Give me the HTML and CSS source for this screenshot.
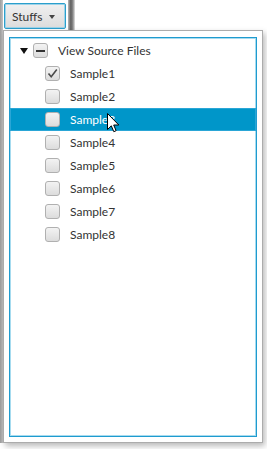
FILE: index.html
```html
<!DOCTYPE html>
<html lang="en">
<head>
    <meta charset="UTF-8">
    <title>Stuffs</title>
    <link rel="stylesheet" href="styles.css">
</head>
<body>

<div class="screen">
    <div class="edge"></div>
    <div class="main">
        <div class="topbar">
            <button class="menuButton">Stuffs <span class="caret"></span></button>
            <div class="windowEdge"></div>
        </div>

        <div class="popup">
            <ul class="tree">
                <li class="row root">
                    <span class="disclosure"></span>
                    <span class="check mixed"></span>
                    <span class="label">View Source Files</span>
                </li>
                <li class="row child">
                    <span class="check checked">
                        <svg width="13" height="13" viewBox="0 0 13 13"><path d="M2.5 6.5 L5.2 9.8 L10.8 2.6" fill="none" stroke="#4a4a4a" stroke-width="1.6"/></svg>
                    </span>
                    <span class="label">Sample1</span>
                </li>
                <li class="row child"><span class="check"></span><span class="label">Sample2</span></li>
                <li class="row child selected"><span class="check"></span><span class="label">Sample3</span></li>
                <li class="row child"><span class="check"></span><span class="label">Sample4</span></li>
                <li class="row child"><span class="check"></span><span class="label">Sample5</span></li>
                <li class="row child"><span class="check"></span><span class="label">Sample6</span></li>
                <li class="row child"><span class="check"></span><span class="label">Sample7</span></li>
                <li class="row child"><span class="check"></span><span class="label">Sample8</span></li>
            </ul>
        </div>
    </div>

    <!-- mouse pointer over Sample3 -->
    <svg class="pointer" width="13" height="20" viewBox="0 0 13 20">
        <path d="M0.5 0.5 L0.5 16.5 L4.3 12.8 L6.8 18.7 L9.1 17.7 L6.7 12 L11.8 12 Z" fill="#fff" stroke="#000" stroke-width="1" stroke-linejoin="round"/>
    </svg>
</div>

</body>
</html>
```

FILE: styles.css
```css
body {
    margin: 0;
    padding: 0;
    font-family: Lato, "Open Sans", sans-serif;
    font-size: 12px;
    color: #333;
    background-color: #fff;
}

.screen {
    position: relative;
    display: flex;
    width: 267px;
    height: 449px;
    overflow: hidden;
}

/* window behind, on the left */
.edge {
    width: 3px;
    height: 443px;
    background: linear-gradient(to right, #9c9c9c, #c4c4c4);
}

.main {
    display: flex;
    flex-direction: column;
}

.topbar {
    display: flex;
    height: 30px;
}

/* Button styles */
.menuButton {
    margin: 3px 0 0 1px;
    width: 62px;
    height: 26px;
    padding: 0 0 0 7px;
    display: flex;
    align-items: center;
    gap: 7px;
    font-family: inherit;
    font-size: 12px;
    color: #333;
    border: 1px solid #2b9fcc;
    border-radius: 2px;
    box-shadow: inset 0 0 0 1px #9fd3e8;
    background: linear-gradient(to bottom, #f0f0f0, #dcdcdc);
}

.caret {
    width: 0;
    height: 0;
    border-left: 3.5px solid transparent;
    border-right: 3.5px solid transparent;
    border-top: 4px solid #444;
    margin-top: 1px;
}

.windowEdge {
    margin-left: 2px;
    width: 7px;
    height: 30px;
    background: linear-gradient(to right, #b8b8b8, #5e5e5e 40%, #8a8a8a 70%, #e4e4e4);
}

/* Popup styles */
.popup {
    box-sizing: border-box;
    width: 260px;
    height: 413px;
    padding: 6px 5px;
    background-color: #fff;
    border: 1px solid #acacac;
    box-shadow: 2px 3px 6px rgba(0, 0, 0, 0.28);
}

.tree {
    list-style: none;
    margin: 0;
    padding: 1px 0 0 0;
    box-sizing: border-box;
    height: 400px;
    border: 1px solid #1f9bcf;
    box-shadow: inset 0 0 0 1px #a6dbef;
}

.row {
    display: flex;
    align-items: center;
    height: 23px;
    padding-left: 10px;
}

.row.child {
    padding-left: 35px;
}

.row.selected {
    background-color: #0096c9;
    box-shadow: inset 0 0 0 1px #2aa6d6;
    color: #fff;
}

.disclosure {
    width: 0;
    height: 0;
    border-left: 4px solid transparent;
    border-right: 4px solid transparent;
    border-top: 6px solid #111;
    margin-right: 5px;
}

.check {
    box-sizing: border-box;
    width: 15px;
    height: 15px;
    display: flex;
    align-items: center;
    justify-content: center;
    border: 1px solid #b0b0b0;
    border-radius: 3px;
    background: linear-gradient(to bottom, #f3f3f3, #dcdcdc);
}

.check.mixed::after {
    content: "";
    width: 9px;
    height: 2px;
    background-color: #333;
}

.label {
    margin-left: 10px;
    white-space: nowrap;
}

.pointer {
    position: absolute;
    left: 107px;
    top: 113px;
}
```
